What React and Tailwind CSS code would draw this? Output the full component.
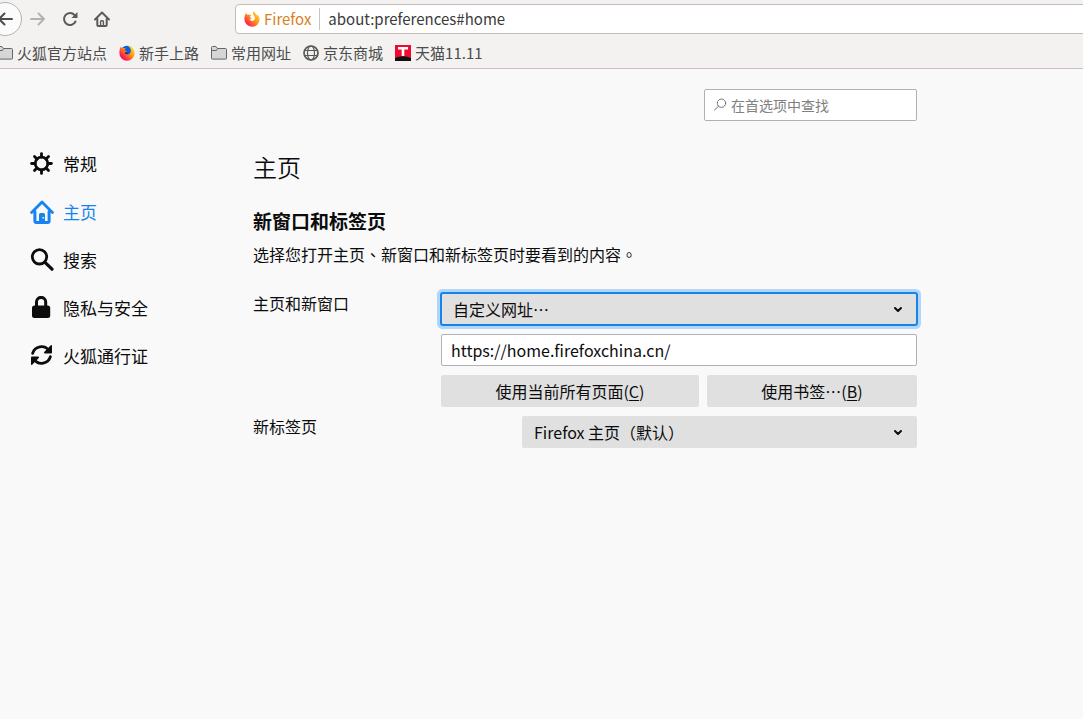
import { useState } from "react";

const categories = [
	{ id: "general", label: "常规", icon: GearIcon },
	{ id: "home", label: "主页", icon: HomeIcon },
	{ id: "search", label: "搜索", icon: SearchIcon },
	{ id: "privacy", label: "隐私与安全", icon: LockIcon },
	{ id: "sync", label: "火狐通行证", icon: SyncIcon },
];

const bookmarks = [
	{ label: "火狐官方站点", icon: FolderIcon },
	{ label: "新手上路", icon: FirefoxGlobeLogo },
	{ label: "常用网址", icon: FolderIcon },
	{ label: "京东商城", icon: GlobeIcon },
	{ label: "天猫11.11", icon: TmallIcon },
];

function GearIcon() {
	return (
		<svg viewBox="0 0 24 24" className="size-6 shrink-0" fill="none" stroke="currentColor" aria-hidden="true">
			<circle cx="11.5" cy="11.5" r="6.3" strokeWidth="2.8" />
			{[0, 45, 90, 135, 180, 225, 270, 315].map((a) => (
				<path key={a} d="M11.5 5V1.600" strokeWidth="2.800" strokeLinecap="round" transform={`rotate(${a} 11.5 11.5)`} />
			))}
		</svg>
	);
}

function HomeIcon() {
	return (
		<svg viewBox="0 0 24 24" className="size-6 shrink-0" fill="none" stroke="currentColor" strokeLinecap="round" strokeLinejoin="round" aria-hidden="true">
			<path d="M1.6 12.4 12 2l10.4 10.4" strokeWidth="2.8" />
			<path d="M4.9 11.5V21a1.4 1.4 0 0 0 1.4 1.4h11.4a1.4 1.4 0 0 0 1.4-1.4v-9.5" strokeWidth="3" />
			<path d="M9 23v-8.5a1.5 1.5 0 0 1 1.5-1.5h3a1.5 1.5 0 0 1 1.5 1.5V23z" fill="currentColor" stroke="none" />
			<path d="M13 17.8h.4" stroke="#f9f9fa" strokeWidth="1.6" />
		</svg>
	);
}

function SearchIcon() {
	return (
		<svg viewBox="0 0 24 24" className="size-6 shrink-0" fill="none" stroke="currentColor" strokeLinecap="round" aria-hidden="true">
			<circle cx="9.5" cy="8.8" r="7.2" strokeWidth="2.8" />
			<path d="m15 14.3 7 6.9" strokeWidth="3.2" />
		</svg>
	);
}

function LockIcon() {
	return (
		<svg viewBox="0 0 24 24" className="size-6 shrink-0" fill="none" stroke="currentColor" aria-hidden="true">
			<path d="M6.500 12V6a4.600 4.600 0 0 1 9.200 0v6" strokeWidth="3" />
			<rect x="2" y="9.500" width="18.200" height="12.500" rx="2.500" fill="currentColor" stroke="none" />
		</svg>
	);
}

function SyncIcon() {
	return (
		<svg viewBox="0 0 24 24" className="size-6 shrink-0" fill="none" stroke="currentColor" strokeWidth="2.800" strokeLinecap="round" aria-hidden="true">
			<path d="M2.600 9.300a9.200 9.200 0 0 1 16.200-3" />
			<path d="M20.400 12.700a9.200 9.200 0 0 1-16.200 3" />
			<path d="M20.800 1.200a.8.8 0 0 1 1.200.6v6.600a1 1 0 0 1-1 1h-6.200a.9.9 0 0 1-.6-1.500z" fill="currentColor" stroke="none" />
			<path d="M2.200 20.800a.8.8 0 0 1-1.200-.6v-6.600a1 1 0 0 1 1-1h6.200a.9.900 0 0 1 .6 1.500z" fill="currentColor" stroke="none" />
		</svg>
	);
}

function FolderIcon() {
	return (
		<svg viewBox="0 0 16 16" className="size-4 shrink-0" fill="#d6d6d6" stroke="#666" strokeLinejoin="round" aria-hidden="true">
			<path d="M.5 13.500V2.500a1 1 0 0 1 1-1h3.400l1.600 2h8a1 1 0 0 1 1 1v9a.6.6 0 0 1-.6.600H1.100a.6.600 0 0 1-.6-.6z" />
			<path d="M.5 5.500h4.900l1.300-2" fill="none" />
		</svg>
	);
}

function GlobeIcon() {
	return (
		<svg viewBox="0 0 16 16" className="size-4 shrink-0" fill="none" stroke="#5a5a5a" aria-hidden="true">
			<circle cx="8" cy="8" r="7" strokeWidth="1.700" />
			<ellipse cx="8" cy="8" rx="3.500" ry="7" strokeWidth="1.200" />
			<path d="M1.500 5.500h13M1.500 10.500h13" strokeWidth="1.200" />
		</svg>
	);
}

function TmallIcon() {
	return (
		<svg viewBox="0 0 16 16" className="size-4 shrink-0" aria-hidden="true">
			<path d="M0 0h16v16H0z" fill="#f00a32" />
			<path d="M0 13q8-3.500 16 0v3H0z" fill="#111" />
			<path d="M3 2h10v2.500H9.300V11H6.700V4.500H3z" fill="#fff" />
		</svg>
	);
}

function FirefoxGlobeLogo() {
	return (
		<svg viewBox="0 0 16 16" className="size-4 shrink-0" aria-hidden="true">
			<defs>
				<linearGradient id="globe-fox" x1="1" y1="0" x2="0" y2="1">
					<stop offset="0.1" stopColor="#ffe226" />
					<stop offset="0.45" stopColor="#ff8a16" />
					<stop offset="0.75" stopColor="#ff1e4b" />
					<stop offset="1" stopColor="#e0007d" />
				</linearGradient>
			</defs>
			<circle cx="8" cy="7" r="6.300" fill="#0a5de0" />
			<path d="M1.600 1.800c.6.300 1 .9 1.300 1.500 1-.5 1.900-.4 2.700 0 .5.300 1 .2 1.600.3-.9.500-1.600 1-1.500 1.800.6.400 1.500.2 2.200.5-.1.900-1.200 1.100-1.800 1.700.3 1.500 1.800 2.200 3.300 1.700 2-.6 2.900-2.700 2.300-4.700C11.200 3 10 1.600 8.900.7c3.600.3 6.700 3.600 6.700 7.500A7.600 7.600 0 0 1 8 15.800 7.600 7.600 0 0 1 .4 8.200c0-2.500.4-4.700 1.200-6.400z" fill="url(#globe-fox)" />
			<path d="M5.800 7.700c1.200-.4 2.200.5 3.600.1-.5 1-1.600 1.300-2.700 1.100z" fill="#14225e" />
		</svg>
	);
}

function FirefoxLogo() {
	return (
		<svg viewBox="0 0 16 16" className="size-4 shrink-0" aria-hidden="true">
			<defs>
				<linearGradient id="fox" x1="1" y1="0" x2="0" y2="1">
					<stop offset="0.1" stopColor="#ffd52b" />
					<stop offset="0.5" stopColor="#ff8a1e" />
					<stop offset="0.8" stopColor="#ff2a4a" />
					<stop offset="1" stopColor="#e6147a" />
				</linearGradient>
			</defs>
			<path d="M2 2c.4.700.7 1.200 1.200 1.700.9-.3 1.900-.3 2.700.1.500.5 1 .6 1.700.7-.9.600-1.700.9-1.700 1.800.7.400 1.400.1 2 .5-.3.800-1.300.9-2 1.500.5 1.300 1.800 1.900 3 1.500 1.900-.6 2.500-2.600 1.600-4.200-.8-1.300-1.900-2.400-1.500-5.100 1.500.5 2.500 1.500 3 2.700.4.200.7.600.9 1.200.2-.3.200-.7.100-1.100 1.600 1.500 2.600 3.300 2.600 5.200A7.500 7.500 0 0 1 8 15.700 7.500 7.500 0 0 1 .4 8.300C.4 5.800 1 3.700 2 2z" fill="url(#fox)" />
		</svg>
	);
}

function SmallHomeIcon() {
	return (
		<svg viewBox="0 0 16 16" className="size-4" fill="none" stroke="currentColor" strokeWidth="2" strokeLinecap="round" strokeLinejoin="round" aria-hidden="true">
			<path d="M1 8.500 8 1.500l7 7" />
			<path d="M3.300 8v6a1 1 0 0 0 1 1h7.400a1 1 0 0 0 1-1V8" />
			<path d="M6.600 14.500v-4a.8.8 0 0 1 .8-.8h1.200a.8.8 0 0 1 .8.800v4" strokeWidth="1.400" />
		</svg>
	);
}

function Toolbar() {
	return (
		<header className="overflow-hidden border-b border-[#c9c0bd] bg-[#f3f2f1] text-[15px] text-[#4c4c4c]">
			<div className="flex h-[38px] items-center">
				<button aria-label="后退" className="-ml-3 flex size-[34px] shrink-0 items-center justify-center rounded-full border border-[#b5b2b0] bg-[#fbfbfb]">
					<svg viewBox="0 0 16 16" className="size-4" fill="none" stroke="currentColor" strokeWidth="2" strokeLinecap="round" strokeLinejoin="round" aria-hidden="true">
						<path d="M15 8H2M7.500 2.500 2 8l5.500 5.500" />
					</svg>
				</button>
				<button aria-label="前进" disabled className="flex h-8 w-8 shrink-0 items-center justify-center text-[#b4b2b1]">
					<svg viewBox="0 0 16 16" className="size-4" fill="none" stroke="currentColor" strokeWidth="2" strokeLinecap="round" strokeLinejoin="round" aria-hidden="true">
						<path d="M1 8h13M8.500 2.500 14 8l-5.500 5.500" />
					</svg>
				</button>
				<button aria-label="刷新" className="flex h-8 w-8 shrink-0 items-center justify-center text-[#5a5a5a]">
					<svg viewBox="0 0 16 16" className="size-4" fill="none" stroke="currentColor" strokeWidth="2" strokeLinecap="round" aria-hidden="true">
						<path d="M13.500 10.500a6 6 0 1 1-1-6.500" />
						<path d="M15.500 1v6h-6z" fill="currentColor" stroke="none" />
					</svg>
				</button>
				<button aria-label="主页" className="flex h-8 w-8 shrink-0 items-center justify-center text-[#5a5a5a]">
					<SmallHomeIcon />
				</button>
				<div className="-mr-2 ml-[117px] flex h-[30px] flex-1 items-center rounded border border-[#c4bcb9] bg-white pl-2">
					<FirefoxLogo />
					<span className="ml-1 pt-px text-[#d7811f]">Firefox</span>
					<span className="ml-2 h-[22px] w-px bg-[#c4c4c4]" />
					<input aria-label="网址" defaultValue="about:preferences#home" className="ml-2 min-w-0 flex-1 bg-transparent pt-px text-[#3a3a3a] outline-none" />
				</div>
			</div>
			<nav aria-label="书签" className="-ml-[3px] flex h-[30px] items-center gap-3">
				{bookmarks.map(({ label, icon: Icon }) => (
					<a key={label} href="#" className="flex items-center gap-1 whitespace-nowrap">
						<Icon />
						{label}
					</a>
				))}
			</nav>
		</header>
	);
}

function Sidebar({ active, onSelect }) {
	return (
		<nav aria-label="类别" className="w-[253px] shrink-0 pt-[71px] pl-[30px]">
			{categories.map(({ id, label, icon: Icon }) => (
				<button
					key={id}
					onClick={() => onSelect(id)}
					className={`flex h-12 items-center gap-[9px] text-[17px] ${active === id ? "text-[#1583f0]" : "text-[#0c0c0d]"}`}
				>
					<Icon />
					{label}
				</button>
			))}
		</nav>
	);
}

function Dropdown({ id, options, focused }) {
	return (
		<div className="relative flex-1">
			<select
				id={id}
				className={`block h-8 w-full appearance-none rounded-[2px] border bg-[#e0e0e0] pr-8 pl-[11px] outline-none ${
					focused ? "border-[#1583e8] shadow-[0_0_0_1px_#1583e8,0_0_0_4px_rgba(10,132,255,0.3)]" : "border-transparent"
				}`}
			>
				{options.map((o) => (
					<option key={o}>{o}</option>
				))}
			</select>
			<svg viewBox="0 0 12 12" className="pointer-events-none absolute top-[10px] right-[13px] size-3" fill="none" stroke="#0c0c0d" strokeWidth="2" strokeLinecap="round" strokeLinejoin="round" aria-hidden="true">
				<path d="m3 5 3 3 3-3" />
			</svg>
		</div>
	);
}

function HomePane() {
	const [url, setUrl] = useState("https://home.firefoxchina.cn/");

	return (
		<main className="max-w-[664px] flex-1 pt-5">
			<div className="flex justify-end">
				<label className="flex h-8 w-[213px] items-center rounded-[2px] border border-[#b1b1b3] bg-white pl-2 text-sm">
					<svg viewBox="0 0 14 14" className="size-[14px] shrink-0" fill="none" stroke="#737373" strokeLinecap="round" aria-hidden="true">
						<circle cx="8.500" cy="5.200" r="4.200" />
						<path d="M5.500 8.300 1.500 12" />
					</svg>
					<input aria-label="在首选项中查找" placeholder="在首选项中查找" className="ml-1 min-w-0 flex-1 bg-transparent outline-none placeholder:text-[#808080]" />
				</label>
			</div>
			<h1 className="mt-[30px] text-2xl leading-8 font-[350]">主页</h1>
			<h2 className="mt-6 text-[19px] leading-7 font-bold">新窗口和标签页</h2>
			<p lang="zh-TW" className="mt-[7px] leading-6">选择您打开主页、新窗口和新标签页时要看到的内容。</p>

			<div className="mt-[27px] flex">
				<label htmlFor="home-mode" className="w-[188px] shrink-0 leading-5">主页和新窗口</label>
				<div className="flex flex-1 flex-col gap-[9px]">
					<Dropdown id="home-mode" options={["自定义网址…", "Firefox 主页（默认）", "空白页"]} focused />
					<input
						aria-label="自定义网址"
						value={url}
						onChange={(e) => setUrl(e.target.value)}
						className="h-8 rounded-[2px] border border-[#b1b1b3] bg-white px-[9px] outline-none"
					/>
					<div className="flex gap-2">
						<button className="h-8 flex-auto rounded-[2px] bg-[#e0e0e0]">
							使用当前所有页面(<span className="underline underline-offset-2">C</span>)
						</button>
						<button className="h-8 flex-auto rounded-[2px] bg-[#e0e0e0]">
							使用书签…(<span className="underline underline-offset-2">B</span>)
						</button>
					</div>
				</div>
			</div>
			<div className="mt-[9px] flex">
				<label htmlFor="newtab-mode" className="w-[269px] shrink-0 leading-5">新标签页</label>
				<Dropdown id="newtab-mode" options={["Firefox 主页（默认）", "空白页"]} />
			</div>
		</main>
	);
}

export default function App() {
	const [active, setActive] = useState("home");

	return (
		<div lang="zh-CN" className="min-h-screen bg-[#f9f9f9] font-['Noto_Sans_CJK_SC',sans-serif] text-base text-[#0c0c0d]">
			<Toolbar />
			<div className="flex pr-6">
				<Sidebar active={active} onSelect={setActive} />
				<HomePane />
			</div>
		</div>
	);
}
